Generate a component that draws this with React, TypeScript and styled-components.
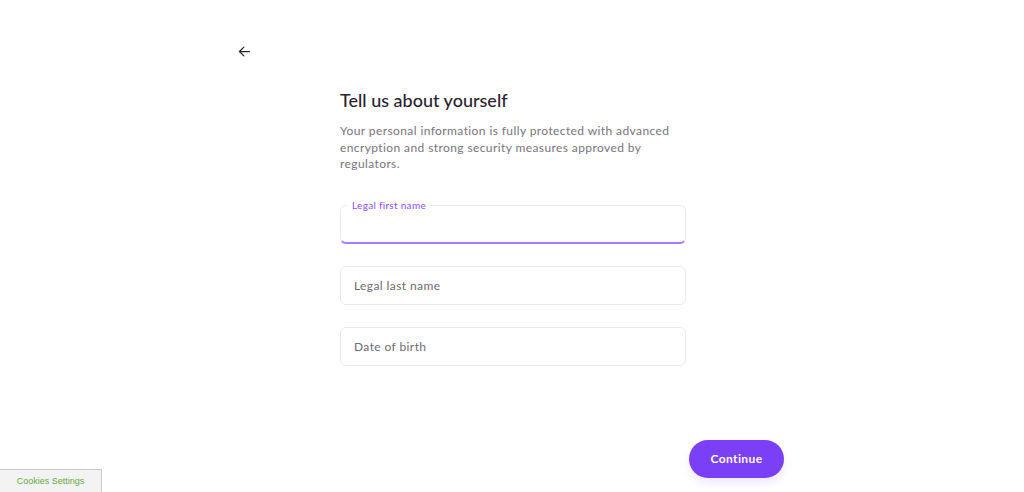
import React from 'react';
import styled, {createGlobalStyle} from 'styled-components';

const GlobalStyle = createGlobalStyle`
  html, body {
    margin: 0;
    padding: 0;
    background: #ffffff;
    font-family: 'Lato', 'Inter', sans-serif;
  }
  * {
    box-sizing: border-box;
  }
`;

const Page = styled.div`
  position: relative;
  width: 1024px;
  height: 492px;
  overflow: hidden;
`;

const Frame = styled.div`
  width: 548px;
  margin-left: 236px;
  padding-top: 43px;
  display: flex;
  flex-direction: column;
`;

const BackButton = styled.button`
  width: 16px;
  height: 16px;
  padding: 0;
  border: none;
  background: none;
  display: flex;
  align-items: center;
  justify-content: center;
  cursor: pointer;
  color: #2a2330;
`;

const Content = styled.div`
  width: 346px;
  margin: 30px 0 0 104px;
  display: flex;
  flex-direction: column;
`;

const Title = styled.h1`
  margin: 0;
  font-size: 18px;
  font-weight: 500;
  color: #2b2230;
  letter-spacing: 0px;
  line-height: 22px;
`;

const Description = styled.p`
  margin: 12px 0 0;
  font-size: 12px;
  line-height: 16.5px;
  color: #7a737d;
  letter-spacing: 0.4px;
`;

const Fields = styled.div`
  margin-top: 32px;
  display: flex;
  flex-direction: column;
  gap: 22px;
`;

const Field = styled.label<{$active?: boolean}>`
  position: relative;
  display: flex;
  align-items: center;
  height: 39px;
  padding: 0 11px;
  border: 1px solid #ebe9ee;
  border-radius: 6px;
  ${({$active}) => $active && `border-bottom: 2px solid #a57bff;`}
`;

const FloatLabel = styled.span`
  position: absolute;
  top: -7px;
  left: 6px;
  padding: 0 5px;
  background: #ffffff;
  font-size: 10px;
  line-height: 12px;
  color: #8b4dff;
  letter-spacing: 0.3px;
`;

const Input = styled.input`
  width: 100%;
  border: none;
  outline: none;
  background: transparent;
  font-family: inherit;
  font-size: 12px;
  color: #2b2230;
  letter-spacing: 0.4px;
  &::placeholder {
    color: #6f6a72;
  }
`;

const Footer = styled.div`
  margin-top: 74px;
  display: flex;
  justify-content: flex-end;
`;

const ContinueButton = styled.button`
  width: 95px;
  height: 38px;
  border: none;
  border-radius: 19px;
  background: #7b3ff5;
  color: #ffffff;
  font-family: inherit;
  font-size: 12px;
  font-weight: 700;
  letter-spacing: 0.4px;
  box-shadow: 0 5px 8px rgba(123, 63, 245, 0.12);
  cursor: pointer;
`;

const CookiesButton = styled.button`
  position: absolute;
  left: 0;
  bottom: 0;
  width: 102px;
  height: 23px;
  padding: 0;
  border: 1px solid #c9c9c9;
  border-bottom: none;
  border-left: none;
  background: #f3f3f3;
  color: #68a845;
  font-family: 'Liberation Sans', Arial, sans-serif;
  font-size: 9px;
  cursor: pointer;
`;

const ArrowLeft = () => (
  <svg width="15" height="15" viewBox="0 0 24 24" fill="none" stroke="currentColor" strokeWidth="2" strokeLinecap="round" strokeLinejoin="round">
    <path d="M20 12H4" />
    <path d="M11 5l-7 7 7 7" />
  </svg>
);

export default function App() {
  return (
    <Page>
      <GlobalStyle />
      <Frame>
        <BackButton aria-label="Back">
          <ArrowLeft />
        </BackButton>
        <Content>
          <Title>Tell us about yourself</Title>
          <Description>
            Your personal information is fully protected with advanced encryption and strong security measures approved by regulators.
          </Description>
          <Fields>
            <Field $active>
              <FloatLabel>Legal first name</FloatLabel>
              <Input />
            </Field>
            <Field>
              <Input placeholder="Legal last name" />
            </Field>
            <Field>
              <Input placeholder="Date of birth" />
            </Field>
          </Fields>
        </Content>
        <Footer>
          <ContinueButton>Continue</ContinueButton>
        </Footer>
      </Frame>
      <CookiesButton>Cookies Settings</CookiesButton>
    </Page>
  );
}
